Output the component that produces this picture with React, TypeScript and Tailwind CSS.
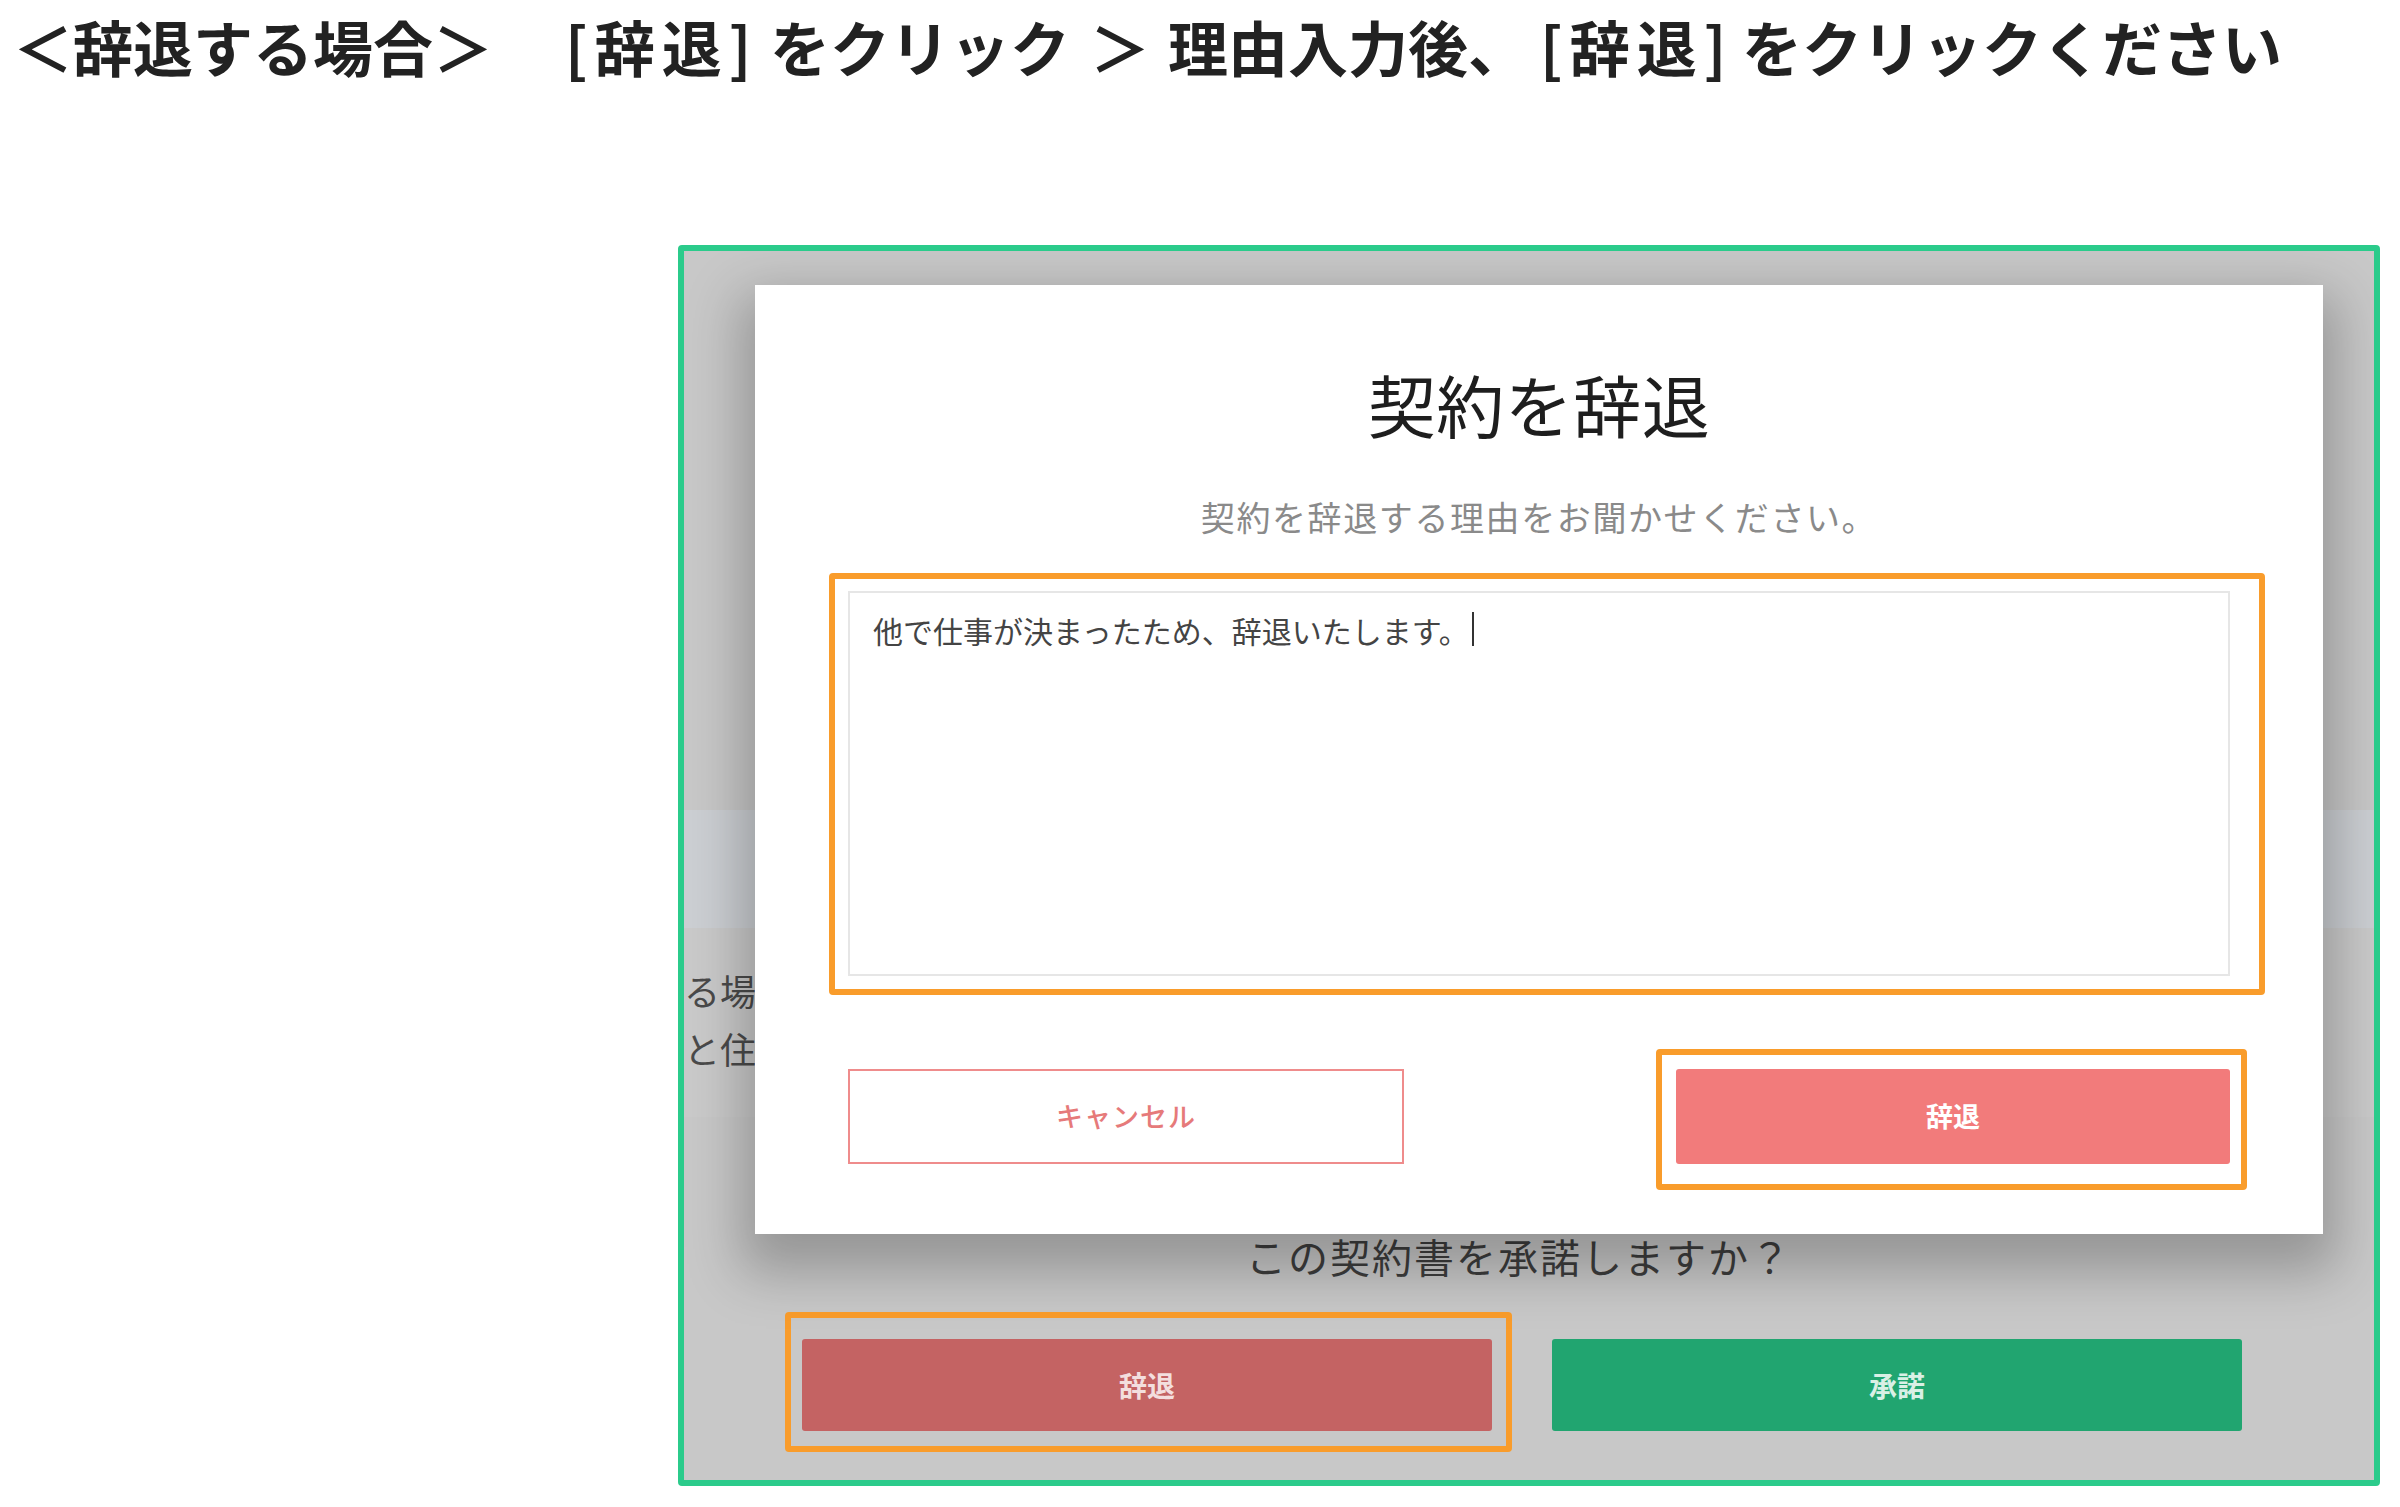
import React from "react";

const font = "font-['Noto_Sans_CJK_JP','Noto_Sans',sans-serif]";

function Heading() {
  return (
    <div className="flex items-start h-[245px] pt-[16px] text-[60px] leading-none font-bold text-[#222222] whitespace-nowrap">
      <span className="ml-[13px] w-[552px] shrink-0">＜辞退する場合＞</span>
      <span className="w-[205px] shrink-0 tracking-[7px]">[辞退]</span>
      <span className="w-[320px] shrink-0">をクリック</span>
      <span className="w-[78px] shrink-0">＞</span>
      <span className="w-[372px] shrink-0">理由入力後、</span>
      <span className="w-[202px] shrink-0 tracking-[7px]">[辞退]</span>
      <span className="shrink-0">をクリックください</span>
    </div>
  );
}

function Annot({ className }: { className: string }) {
  return (
    <div
      className={
        "absolute border-[6px] border-[#f99c2b] rounded-[4px] pointer-events-none " +
        className
      }
    />
  );
}

function Modal() {
  return (
    <div className="absolute left-[71px] top-[34px] w-[1568px] h-[949px] bg-white shadow-[0_24px_50px_14px_rgba(0,0,0,0.25)] flex flex-col items-stretch px-[93px] pt-[85px]">
      <div className="text-center text-[68px] leading-none text-[#1e1e1e] font-normal tracking-[0.5px]">
        契約を辞退
      </div>
      <div className="mt-[62px] text-center text-[34px] leading-none text-[#8a8a8a] tracking-[1.6px]">
        契約を辞退する理由をお聞かせください。
      </div>
      <div className="relative mt-[57px]">
        <div className="h-[385px] border-2 border-[#e6e6e6] pt-[22px] pl-[23px] text-[30px] leading-none text-[#444444] flex items-start">
          <span>他で仕事が決まったため、辞退いたします。</span>
          <span className="ml-[3px] w-[2px] h-[34px] -mt-[3px] bg-[#333333]" />
        </div>
        <Annot className="-left-[19px] -right-[35px] -top-[18px] -bottom-[19px]" />
      </div>
      <div className="mt-[93px] flex justify-between">
        <div className="w-[556px] h-[95px] border-2 border-[#ef8c8c] flex items-center justify-center text-[27px] font-medium text-[#e67a7a] tracking-[1px]">
          キャンセル
        </div>
        <div className="relative w-[554px] h-[95px]">
          <div className="w-full h-full bg-[#f27b7b] rounded-[3px] flex items-center justify-center text-[27px] font-bold text-white">
            辞退
          </div>
          <Annot className="-left-[20px] -right-[17px] -top-[20px] -bottom-[26px]" />
        </div>
      </div>
    </div>
  );
}

function Underlay() {
  return (
    <div className="flex flex-col h-full">
      <div className="h-[559px] bg-[#c8c8c8] shrink-0" />
      <div className="h-[118px] bg-[#cccfd3] shrink-0" />
      <div className="h-[189px] bg-[#cacaca] shrink-0 pt-[44px] text-[36px] text-[#4a4a4a] whitespace-nowrap">
        <div className="leading-none h-[58px]">る場</div>
        <div className="leading-none h-[58px]">と住</div>
      </div>
      <div className="flex-1 bg-[#c8c8c8] flex flex-col items-center">
        <div className="mt-[119px] ml-[-20px] text-[40px] leading-none text-[#3d3d3d] tracking-[2px]">
          この契約書を承諾しますか？
        </div>
        <div className="mt-[63px] flex gap-[60px] self-start ml-[118px]">
          <div className="relative w-[690px] h-[92px]">
            <div className="w-full h-full bg-[#c46363] rounded-[3px] flex items-center justify-center text-[28px] font-bold text-[#f3dede]">
              辞退
            </div>
            <Annot className="-left-[17px] -right-[20px] -top-[27px] -bottom-[21px]" />
          </div>
          <div className="w-[690px] h-[92px] bg-[#21a570] rounded-[3px] flex items-center justify-center text-[28px] font-bold text-[#d9f0e5]">
            承諾
          </div>
        </div>
      </div>
    </div>
  );
}

export default function App() {
  return (
    <div className={"w-[2400px] h-[1507px] bg-white overflow-hidden " + font}>
      <Heading />
      <div className="ml-[678px] w-[1702px] h-[1241px] border-[6px] border-[#2bcb8b] rounded-[4px] relative overflow-hidden">
        <Underlay />
        <Modal />
      </div>
    </div>
  );
}
